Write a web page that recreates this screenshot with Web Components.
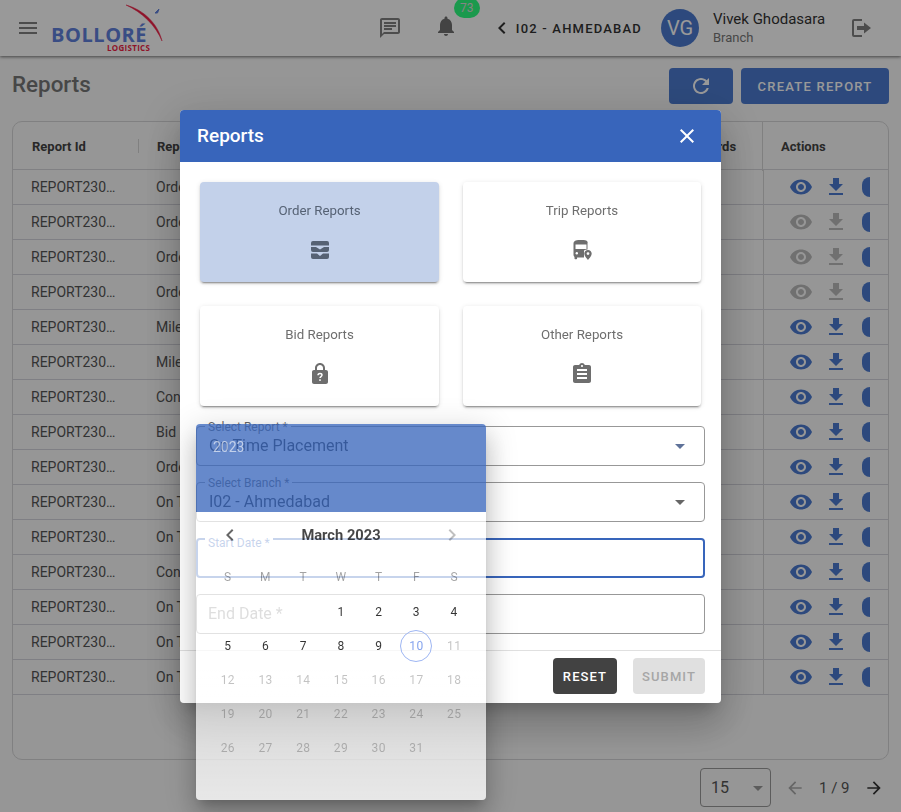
<!DOCTYPE html>
<html>
<head>
<meta charset="utf-8">
<title>Reports</title>
<style>
html, body { margin: 0; height: 100%; }
body { font-family: Roboto, "Liberation Sans", sans-serif; color: #222; background: #fafafa; overflow: hidden; }
</style>
</head>
<body>
<app-header></app-header>
<reports-page></reports-page>
<report-dialog></report-dialog>
<date-picker></date-picker>

<script>
const ICONS = {
    menu: '<path d="M3 18h18v-2H3v2zm0-5h18v-2H3v2zm0-7v2h18V6H3z"/>',
    chat: '<path d="M20 2H4c-1.1 0-2 .9-2 2v18l4-4h14c1.1 0 2-.9 2-2V4c0-1.1-.9-2-2-2zm0 14H6l-2 2V4h16v12z"/><path d="M6 12h8v2H6zm0-3h12v2H6zm0-3h12v2H6z"/>',
    bell: '<path d="M12 22c1.1 0 2-.9 2-2h-4c0 1.1.89 2 2 2zm6-6v-5c0-3.07-1.64-5.64-4.5-6.32V4c0-.83-.67-1.5-1.5-1.5s-1.5.67-1.5 1.5v.68C7.63 5.36 6 7.92 6 11v5l-2 2v1h16v-1l-2-2z"/>',
    chevronLeft: '<path d="M15.41 7.41 14 6l-6 6 6 6 1.41-1.41L10.83 12z"/>',
    chevronRight: '<path d="M8.59 16.59 10 18l6-6-6-6-1.41 1.41L13.17 12z"/>',
    logout: '<path d="M13 3H5a2 2 0 0 0-2 2v14a2 2 0 0 0 2 2h8v-2H5V5h8z"/><path d="M8 10h7V6.5l7 5.5-7 5.5V14H8z"/>',
    refresh: '<path d="M17.65 6.35C16.2 4.9 14.21 4 12 4c-4.42 0-7.99 3.58-7.99 8s3.57 8 7.99 8c3.73 0 6.84-2.55 7.73-6h-2.08c-.82 2.33-3.04 4-5.65 4-3.31 0-6-2.69-6-6s2.69-6 6-6c1.66 0 3.14.69 4.22 1.78L13 11h7V4l-2.35 2.35z"/>',
    close: '<path d="M19 6.41 17.59 5 12 10.59 6.41 5 5 6.41 10.59 12 5 17.59 6.41 19 12 13.41 17.59 19 19 17.59 13.41 12z"/>',
    dropdown: '<path d="M7 10l5 5 5-5z"/>',
    eye: '<path d="M12 4.5C7 4.5 2.73 7.61 1 12c1.73 4.39 6 7.5 11 7.5s9.27-3.11 11-7.5c-1.73-4.39-6-7.5-11-7.5zM12 17c-2.76 0-5-2.24-5-5s2.24-5 5-5 5 2.24 5 5-2.24 5-5 5zm0-8c-1.66 0-3 1.34-3 3s1.34 3 3 3 3-1.34 3-3-1.34-3-3-3z"/>',
    download: '<path d="M19 9h-4V3H9v6H5l7 7 7-7zM5 18v2h14v-2H5z"/>',
    arrowLeft: '<path d="M20 11H7.83l5.59-5.59L12 4l-8 8 8 8 1.41-1.41L7.83 13H20v-2z"/>',
    arrowRight: '<path d="M12 4l-1.41 1.41L16.17 11H4v2h12.17l-5.58 5.59L12 20l8-8z"/>',
    inbox: '<path fill-rule="evenodd" d="M5 3h14a2 2 0 0 1 2 2v7a2 2 0 0 1-2 2H5a2 2 0 0 1-2-2V5a2 2 0 0 1 2-2zM3 7.6V9h5l4 2.6L16 9h5V7.6z"/><path d="M3 15.5h6l3 2.4 3-2.4h6V19a2 2 0 0 1-2 2H5a2 2 0 0 1-2-2z"/>',
    bus: '<path fill-rule="evenodd" d="M11 2C7 2 3.500 2.400 3.500 5.500V17c0 .8.4 1.500 1 1.900v1.600c0 .4.3.7.7.7h1.200c.4 0 .7-.3.7-.7v-1h6.900v-7c.9-.6 2.100-1 3.500-1V5.500C18.500 2.400 15 2 11 2zM5.500 6.500h11v4.500h-11z"/><circle cx="6.800" cy="15.200" r="1.200" fill="#fff"/><path fill-rule="evenodd" d="M18 12c-2 0-3.700 1.600-3.700 3.600 0 2.700 3.700 6.400 3.700 6.400s3.700-3.700 3.700-6.400c0-2-1.700-3.600-3.700-3.600zm0 5a1.400 1.400 0 1 1 0-2.800 1.400 1.400 0 0 1 0 2.800z"/>',
    lockHelp: '<path d="M18 8h-1V6c0-2.76-2.24-5-5-5S7 3.24 7 6v2H6c-1.1 0-2 .9-2 2v10c0 1.1.9 2 2 2h12c1.1 0 2-.9 2-2V10c0-1.1-.9-2-2-2zM9 6c0-1.66 1.34-3 3-3s3 1.34 3 3v2H9V6z"/><path d="M10 13.200c0-1.100.9-1.800 2-1.800s2 .7 2 1.700c0 1.400-2 1.500-2 2.900" fill="none" stroke="#fff" stroke-width="1.500"/><rect x="11.200" y="17.300" width="1.600" height="1.600" fill="#fff"/>',
    assignment: '<path d="M19 3h-4.180C14.400 1.840 13.300 1 12 1c-1.300 0-2.400.84-2.820 2H5c-1.100 0-2 .9-2 2v14c0 1.100.9 2 2 2h14c1.100 0 2-.9 2-2V5c0-1.100-.9-2-2-2zm-7 0c.55 0 1 .45 1 1s-.45 1-1 1-1-.45-1-1 .45-1 1-1zm5 14H7v-2h10v2zm0-4H7v-2h10v2zm0-4H7V7h10v2z"/>'
};

class AppIcon extends HTMLElement {
    connectedCallback() {
        const size = this.getAttribute('size') || 24;
        const name = this.getAttribute('name');
        this.attachShadow({ mode: 'open' });
        this.shadowRoot.innerHTML = `
        <style>
        :host { display: inline-flex; flex: none; width: ${size}px; height: ${size}px; }
        svg { width: 100%; height: 100%; fill: currentColor; display: block; }
        </style>
        <svg viewBox="0 0 24 24">${ICONS[name]}</svg>`;
    }
}

const headerTemplate = document.createElement('template');
headerTemplate.innerHTML = `
<style>
:host { display: flex; align-items: center; height: 56px; padding: 0 28px 0 16px; background: #fff; box-shadow: 0 1px 3px rgba(0,0,0,.55); position: relative; color: #808080; }
.logo { position: relative; width: 112px; height: 56px; margin-left: 12px; flex: none; }
.logo svg { position: absolute; left: 0; top: 0; }
.brand { position: absolute; left: -1px; top: 23px; font: 700 20px/24px "Open Sans", sans-serif; color: #6080dc; letter-spacing: .55px; }
.sub { position: absolute; left: 55px; top: 43px; font: 700 8px/10px "Open Sans", sans-serif; color: #ee1f45; letter-spacing: .3px; }
.right { margin-left: auto; display: flex; align-items: center; }
.bell { position: relative; margin-left: 32px; color: #707070; }
.badge { position: absolute; left: 20px; top: -16px; width: 26px; height: 20px; border-radius: 10px; background: #2dff80; color: #ddd; font-size: 12px; line-height: 20px; text-align: center; }
.branch { display: flex; align-items: center; margin-left: 32px; color: #333; }
.branch span { margin-left: 2px; font-size: 13px; font-weight: 500; letter-spacing: 1.2px; }
.avatar { width: 38px; height: 38px; border-radius: 50%; background: #4c7bd0; color: #fff; font-size: 20px; line-height: 38px; text-align: center; margin-left: 19px; }
.user { margin-left: 14px; width: 112px; }
.name { font-size: 15px; line-height: 18px; color: #333; white-space: nowrap; }
.role { font-size: 13px; line-height: 19px; color: #777; }
.out { margin-left: 24px; }
</style>
<app-icon name="menu"></app-icon>
<div class="logo">
  <span class="brand">BOLLORÉ</span>
  <span class="sub">LOGISTICS</span>
  <svg width="112" height="56" viewBox="0 0 112 56">
    <path d="M74 5C92 10 106 24 110 41C104 26 90 12 74 5z" fill="#ee1f45" stroke="#ee1f45" stroke-width=".5"/>
    <path d="M103 13l4-4-1.500 4z" fill="#6080dc" stroke="#6080dc"/>
  </svg>
</div>
<div class="right">
  <app-icon name="chat"></app-icon>
  <div class="bell"><app-icon name="bell"></app-icon><div class="badge">73</div></div>
  <div class="branch"><app-icon name="chevronLeft"></app-icon><span>I02 - AHMEDABAD</span></div>
  <div class="avatar">VG</div>
  <div class="user"><div class="name">Vivek Ghodasara</div><div class="role">Branch</div></div>
  <app-icon class="out" name="logout"></app-icon>
</div>
`;

class AppHeader extends HTMLElement {
    constructor() {
        super();
        this.attachShadow({ mode: 'open' });
        this.shadowRoot.appendChild(headerTemplate.content.cloneNode(true));
    }
}

const ROW_TYPES = ['Order Report', 'Order Report', 'Order Report', 'Order Report', 'Mileage', 'Mileage', 'Consolidated', 'Bid Report', 'Order Report', 'On Time', 'On Time', 'Consolidated', 'On Time', 'On Time', 'On Time'];
const DISABLED_ROWS = [1, 2, 3];

const tableTemplate = document.createElement('template');
tableTemplate.innerHTML = `
<style>
:host { display: block; height: 639px; box-sizing: border-box; border: 1px solid #d6d6d8; border-radius: 10px; background: #fbfbfb; overflow: hidden; }
.row { display: grid; grid-template-columns: 125px 1fr 96px 126px; align-items: center; }
.head { height: 48px; box-sizing: border-box; border-bottom: 1px solid #d6d6da; font-size: 13px; font-weight: 700; color: #444; }
.head div { padding-left: 19px; line-height: 49px; }
.head .sep { position: relative; }
.head .sep::before { content: ""; position: absolute; left: 0; top: 17px; height: 14px; width: 1px; background: #d6d6d6; }
.head .rec { padding-left: 22px; }
.head .act { border-left: 1px solid #d6d6d6; padding-left: 18px; }
.body .row { height: 35px; border-bottom: 1px solid #d4d4dc; box-sizing: border-box; font-size: 14px; color: #555; }
.body .row > div { padding-left: 18px; white-space: nowrap; overflow: hidden; }
.body .act { height: 100%; display: flex; align-items: center; border-left: 1px solid #d6d6d6; margin-left: 1px; padding-left: 25px !important; color: #4c7bd0; }
.body .off .eye, .body .off .dl { color: #bbb; }
.dl { margin-left: 11px; }
.half { width: 8px; height: 20px; border-radius: 10px 0 0 10px; background: #4c7bd0; margin-left: 14px; }
</style>
<div class="row head"><div>Report Id</div><div class="sep">Report Type</div><div class="rec">Records</div><div class="act">Actions</div></div>
<div class="body"></div>
`;

class ReportTable extends HTMLElement {
    constructor() {
        super();
        this.attachShadow({ mode: 'open' });
        this.shadowRoot.appendChild(tableTemplate.content.cloneNode(true));
        this.shadowRoot.querySelector('.body').innerHTML = ROW_TYPES.map((type, i) => `
        <div class="row ${DISABLED_ROWS.includes(i) ? 'off' : ''}">
          <div>REPORT230…</div><div>${type}</div><div></div>
          <div class="act"><app-icon class="eye" name="eye"></app-icon><app-icon class="dl" name="download"></app-icon><span class="half"></span></div>
        </div>`).join('');
    }
}

const pageTemplate = document.createElement('template');
pageTemplate.innerHTML = `
<style>
:host { display: block; padding: 12px 12px 0; }
.top { display: flex; align-items: center; height: 36px; margin-bottom: 17px; }
h1 { margin: -4px auto 0 0; font-size: 22.400px; font-weight: 500; color: #777; }
.btn { height: 36px; box-sizing: border-box; border-radius: 4px; background: #4c7bd0; color: #fff; display: flex; align-items: center; justify-content: center; }
.refresh { width: 64px; margin-right: 8px; }
.create { width: 148px; font-size: 13px; font-weight: 500; letter-spacing: 1.25px; }
.pager { display: flex; align-items: center; margin-top: 8px; font-size: 16px; color: #555; padding-right: 5.500px; }
.size { width: 71px; height: 39px; box-sizing: border-box; border: 1px solid #999; border-radius: 4px; display: flex; align-items: center; padding-left: 10px; margin-left: auto; }
.size app-icon { margin-left: auto; color: #999; }
.prev { margin-left: 14px; color: #aaa; }
.count { margin: 0 14px; font-size: 15px; white-space: nowrap; }
.next { color: #333; }
</style>
<div class="top">
  <h1>Reports</h1>
  <div class="btn refresh"><app-icon name="refresh"></app-icon></div>
  <div class="btn create">CREATE REPORT</div>
</div>
<report-table></report-table>
<div class="pager">
  <div class="size">15<app-icon name="dropdown"></app-icon></div>
  <app-icon class="prev" name="arrowLeft" size="20"></app-icon>
  <span class="count">1 / 9</span>
  <app-icon class="next" name="arrowRight" size="20"></app-icon>
</div>
`;

class ReportsPage extends HTMLElement {
    constructor() {
        super();
        this.attachShadow({ mode: 'open' });
        this.shadowRoot.appendChild(pageTemplate.content.cloneNode(true));
    }
}

const cardTemplate = document.createElement('template');
cardTemplate.innerHTML = `
<style>
:host { display: flex; flex-direction: column; align-items: center; height: 100px; box-sizing: border-box; padding-top: 21px; border-radius: 4px; background: #fff; color: #6e6e6e; font-size: 13.300px; box-shadow: 0 3px 1px -2px rgba(0,0,0,.25), 0 2px 2px 0 rgba(0,0,0,.16), 0 1px 5px 0 rgba(0,0,0,.12); }
:host([selected]) { background: #c3d1ea; color: #566274; }
.title { line-height: 16px; margin-bottom: 19px; }
</style>
<div class="title"></div>
<app-icon></app-icon>
`;

class ReportCard extends HTMLElement {
    constructor() {
        super();
        this.attachShadow({ mode: 'open' });
        const content = cardTemplate.content.cloneNode(true);
        content.querySelector('.title').textContent = this.getAttribute('title');
        // the icon reads its name when it connects, so set it before appending
        content.querySelector('app-icon').setAttribute('name', this.getAttribute('icon'));
        this.shadowRoot.appendChild(content);
    }
}

const fieldTemplate = document.createElement('template');
fieldTemplate.innerHTML = `
<style>
:host { display: flex; align-items: center; position: relative; height: 40px; box-sizing: border-box; border: 1px solid #989898; border-radius: 4px; padding-left: 12px; font-size: 16px; color: #333; }
:host([focused]) { border: 2px solid #3865bb; padding-left: 11px; }
.label { position: absolute; left: 8px; top: -7px; padding: 0 3px; background: #fff; font-size: 12px; line-height: 14px; color: #666; }
:host([focused]) .label { top: -4px; left: 7px; color: #3865bb; }
:host([placeholder]) { padding-left: 11px; }
:host([placeholder]) .label { position: static; padding: 0; background: none; font-size: 16px; line-height: 20px; color: #888; }
.arrow { margin-left: auto; margin-right: 12px; color: var(--arrow-color, #666); }
</style>
<span class="label"></span><span class="value"></span>
`;

class FormField extends HTMLElement {
    constructor() {
        super();
        this.attachShadow({ mode: 'open' });
        this.shadowRoot.appendChild(fieldTemplate.content.cloneNode(true));
        this.shadowRoot.querySelector('.label').textContent = this.getAttribute('label');
        this.shadowRoot.querySelector('.value').textContent = this.getAttribute('value') || '';
        if (this.hasAttribute('select')) {
            const arrow = document.createElement('app-icon');
            arrow.className = 'arrow';
            arrow.setAttribute('name', 'dropdown');
            this.shadowRoot.appendChild(arrow);
        }
    }
}

const dialogTemplate = document.createElement('template');
dialogTemplate.innerHTML = `
<style>
:host { position: fixed; inset: 0; display: flex; align-items: center; justify-content: center; background: rgba(0,0,0,.4); }
.dialog { width: 541px; height: 593px; display: flex; flex-direction: column; background: #fff; border-radius: 4px; overflow: hidden; }
.shadow { border-radius: 4px; box-shadow: 0 11px 15px -7px rgba(0,0,0,.2), 0 24px 38px 3px rgba(0,0,0,.14), 0 9px 46px 8px rgba(0,0,0,.12); }
header { height: 52px; flex: none; display: flex; align-items: center; justify-content: space-between; padding: 0 22px 0 17px; background: #3865bb; color: #fff; font-size: 19px; font-weight: 500; }
.cards { display: grid; grid-template-columns: 239px 238px; gap: 24px; padding: 20px 20px 20px 20px; }
.fields { display: flex; flex-direction: column; gap: 16px; padding: 0 16px 16px; }
footer { height: 52px; box-sizing: border-box; border-top: 1px solid #e0e0e0; display: flex; justify-content: flex-end; align-items: center; gap: 16px; padding: 0 16px; }
.btn { height: 36px; box-sizing: border-box; border-radius: 4px; display: flex; align-items: center; justify-content: center; font-size: 13px; font-weight: 500; letter-spacing: 1.1px; }
.reset { width: 64px; background: #424242; color: #fff; }
.submit { width: 72px; background: #e0e0e0; color: #a6a6a6; }
</style>
<div class="shadow">
<div class="dialog">
  <header>Reports<app-icon name="close"></app-icon></header>
  <div class="cards">
    <report-card title="Order Reports" icon="inbox" selected></report-card>
    <report-card title="Trip Reports" icon="bus"></report-card>
    <report-card title="Bid Reports" icon="lockHelp"></report-card>
    <report-card title="Other Reports" icon="assignment"></report-card>
  </div>
  <div class="fields">
    <form-field label="Select Report *" value="On Time Placement" select style="--arrow-color:#5f7299"></form-field>
    <form-field label="Select Branch *" value="I02 - Ahmedabad" select></form-field>
    <form-field label="Start Date *" focused></form-field>
    <form-field label="End Date *" placeholder></form-field>
  </div>
  <footer><div class="btn reset">RESET</div><div class="btn submit">SUBMIT</div></footer>
</div>
</div>
`;

class ReportDialog extends HTMLElement {
    constructor() {
        super();
        this.attachShadow({ mode: 'open' });
        this.shadowRoot.appendChild(dialogTemplate.content.cloneNode(true));
    }
}

const pickerTemplate = document.createElement('template');
pickerTemplate.innerHTML = `
<style>
:host { position: fixed; left: 196px; top: 424px; width: 290px; height: 376px; border-radius: 4px; overflow: hidden; display: flex; flex-direction: column; box-shadow: 0 8px 10px -5px rgba(0,0,0,.2), 0 16px 24px 2px rgba(0,0,0,.14), 0 6px 30px 5px rgba(0,0,0,.12); }
.toolbar { height: 88px; flex: none; box-sizing: border-box; padding: 14px 17px; background: rgba(56,101,187,.77); color: rgba(255,255,255,.6); font-size: 14px; line-height: 18px; }
.body { flex: 1; background: linear-gradient(rgba(255,255,255,.72) 0 55%, rgba(255,255,255,.6) 60%, rgba(255,255,255,.78)); padding: 0 13px; }
.month { height: 46px; display: flex; align-items: center; justify-content: space-between; padding: 0 9px; font-size: 14.700px; font-weight: 700; color: rgba(0,0,0,.72); }
.month app-icon:first-child { color: rgba(0,0,0,.6); }
.month app-icon:last-child { color: rgba(0,0,0,.25); }
.grid { display: grid; grid-template-columns: repeat(7, 1fr); }
.grid div { height: 34px; display: flex; align-items: center; justify-content: center; font-size: 12px; letter-spacing: .4px; color: rgba(0,0,0,.8); position: relative; }
.grid .dow { color: rgba(0,0,0,.36); height: 37px; }
.grid .off { color: rgba(0,0,0,.24); }
.grid .today { color: #86a4ee; }
.grid .today::after { content: ""; position: absolute; left: 2.800px; top: 1px; width: 30px; height: 30px; border: 1px solid #9db5f2; border-radius: 50%; }
</style>
<div class="toolbar">2023</div>
<div class="body">
  <div class="month"><app-icon name="chevronLeft"></app-icon>March 2023<app-icon name="chevronRight"></app-icon></div>
  <div class="grid"></div>
</div>
`;

class DatePicker extends HTMLElement {
    constructor() {
        super();
        this.attachShadow({ mode: 'open' });
        this.shadowRoot.appendChild(pickerTemplate.content.cloneNode(true));
        // 1 March 2023 is a Wednesday, only days up to the 10th can be picked
        let cells = ['S', 'M', 'T', 'W', 'T', 'F', 'S'].map(d => `<div class="dow">${d}</div>`).join('');
        cells += '<div></div><div></div><div></div>';
        for (let day = 1; day <= 31; day++) {
            const cls = day === 10 ? 'today' : day > 10 ? 'off' : '';
            cells += `<div class="${cls}">${day}</div>`;
        }
        this.shadowRoot.querySelector('.grid').innerHTML = cells;
    }
}

customElements.define('app-icon', AppIcon);
customElements.define('app-header', AppHeader);
customElements.define('report-table', ReportTable);
customElements.define('reports-page', ReportsPage);
customElements.define('report-card', ReportCard);
customElements.define('form-field', FormField);
customElements.define('report-dialog', ReportDialog);
customElements.define('date-picker', DatePicker);
</script>
</body>
</html>
